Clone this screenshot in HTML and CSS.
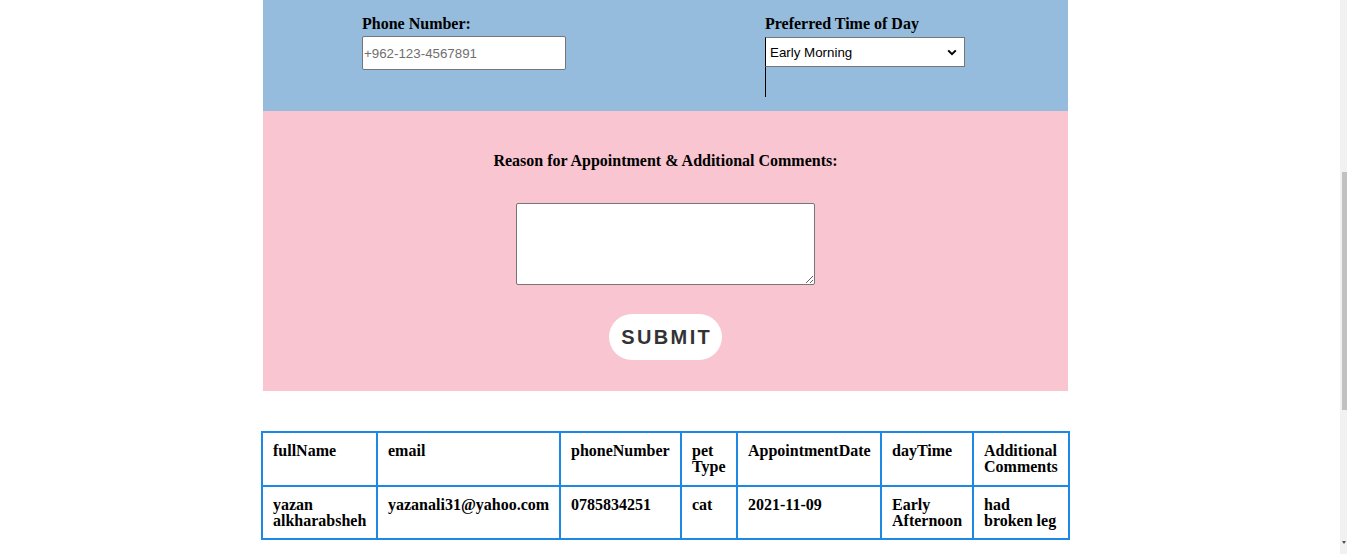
FILE: index.html
```html
<!DOCTYPE html>
<html lang="en">
<head>
<meta charset="utf-8">
<title>Appointment</title>
<link rel="stylesheet" href="styles.css">
</head>
<body>
<div class="page">
  <section class="contact">
    <div class="col col-left">
      <label class="lbl" for="phone">Phone Number:</label>
      <input id="phone" class="phone" type="tel" placeholder="+962-123-4567891">
    </div>
    <div class="col col-right">
      <label class="lbl" for="daytime">Preferred Time of Day</label>
      <div class="sel-wrap">
        <select id="daytime" class="time">
          <option>Early Morning</option>
          <option>Late Morning</option>
          <option>Early Afternoon</option>
          <option>Late Afternoon</option>
        </select>
      </div>
    </div>
  </section>
  <section class="comments">
    <label class="lbl" for="reason">Reason for Appointment &amp; Additional Comments:</label>
    <textarea id="reason" class="reason"></textarea>
    <button class="submit" type="button">SUBMIT</button>
  </section>
  <table class="records">
    <thead>
      <tr>
        <th class="c1">fullName</th>
        <th class="c2">email</th>
        <th class="c3">phoneNumber</th>
        <th class="c4">pet Type</th>
        <th class="c5">AppointmentDate</th>
        <th class="c6">dayTime</th>
        <th class="c7">Additional Comments</th>
      </tr>
    </thead>
    <tbody>
      <tr>
        <td>yazan alkharabsheh</td>
        <td>yazanali31@yahoo.com</td>
        <td>0785834251</td>
        <td>cat</td>
        <td>2021-11-09</td>
        <td>Early Afternoon</td>
        <td>had broken leg</td>
      </tr>
    </tbody>
  </table>
</div>
<div class="scrollbar"><div class="thumb"></div><div class="arrow"></div></div>
</body>
</html>
```
FILE: styles.css
```css
html, body {
  margin: 0;
  padding: 0;
  background: #ffffff;
}

body {
  font-family: "Liberation Serif", "Times New Roman", serif;
  color: #000;
}

.page {
  width: 805px;
  margin-left: 263px;
  display: flex;
  flex-direction: column;
  align-items: center;
}

.lbl {
  font-family: "Liberation Serif", "Times New Roman", serif;
  font-weight: bold;
  font-size: 16px;
  line-height: 18px;
  display: block;
}

.contact {
  width: 805px;
  height: 111px;
  box-sizing: border-box;
  padding-top: 15px;
  background: #95bcdc;
  display: grid;
  grid-template-columns: 1fr 1fr;
}

.col {
  display: flex;
  flex-direction: column;
  align-items: flex-start;
}

.col-left {
  padding-left: 99px;
}

.col-right {
  padding-left: 99.5px;
}

.phone {
  margin: 3px 0 0 0;
  width: 204px;
  height: 34px;
  box-sizing: border-box;
  border: 1px solid #767676;
  border-radius: 2px;
  padding: 1px 1px;
  font-family: "Liberation Sans", Arial, sans-serif;
  font-size: 13.333px;
  background: #fff;
  outline: none;
}

.phone::placeholder {
  color: #6f6f6f;
}

.sel-wrap {
  margin-top: 4px;
  height: 60px;
  border-left: 1px solid #000;
}

.time {
  margin: 0 0 0 -1px;
  width: 200px;
  height: 30px;
  box-sizing: border-box;
  border: 1px solid #767676;
  border-left-color: #000;
  border-radius: 0;
  padding: 0 0 0 4px;
  -webkit-appearance: none;
  appearance: none;
  font-family: "Liberation Sans", Arial, sans-serif;
  font-size: 13.333px;
  color: #000;
  background-color: #fff;
  background-image: url("data:image/svg+xml;utf8,<svg xmlns='http://www.w3.org/2000/svg' width='10' height='7' viewBox='0 0 10 7'><path d='M1.2 1.4 L5 5.2 L8.8 1.4' fill='none' stroke='black' stroke-width='2'/></svg>");
  background-repeat: no-repeat;
  background-position: right 7px center;
  background-size: 10px 7px;
  outline: none;
}

.comments {
  width: 805px;
  height: 280px;
  box-sizing: border-box;
  padding-top: 41px;
  background: #f9c5d0;
  display: flex;
  flex-direction: column;
  align-items: center;
}

.reason {
  margin: 33px 0 0 0;
  width: 299px;
  height: 82px;
  box-sizing: border-box;
  border: 1px solid #767676;
  border-radius: 2px;
  background: #fff;
  display: block;
  outline: none;
}

.submit {
  margin-top: 29px;
  width: 113px;
  height: 46px;
  border: none;
  border-radius: 23px;
  background: #fff;
  color: #333;
  font-family: "Liberation Sans", Arial, sans-serif;
  font-weight: bold;
  font-size: 20px;
  letter-spacing: 2.4px;
  padding: 0 0 0 2.4px;
  cursor: pointer;
}

.records {
  margin-top: 40px;
  width: 809px;
  table-layout: fixed;
  border-collapse: separate;
  border-spacing: 0;
  border-top: 2px solid #1e88e5;
  border-left: 2px solid #1e88e5;
}

.records th,
.records td {
  box-sizing: border-box;
  border-right: 2px solid #1e88e5;
  border-bottom: 2px solid #1e88e5;
  padding: 10px;
  font-family: "Liberation Serif", "Times New Roman", serif;
  font-weight: bold;
  font-size: 16px;
  line-height: 16px;
  text-align: left;
  vertical-align: top;
  color: #000;
}

.records td {
  padding-bottom: 9px;
}

.records .c1 { width: 115px; }
.records .c2 { width: 183px; }
.records .c3 { width: 121px; }
.records .c4 { width: 56px; }
.records .c5 { width: 144px; }
.records .c6 { width: 92px; }
.records .c7 { width: 96px; }

.scrollbar {
  position: fixed;
  top: 0;
  right: 0;
  width: 7px;
  height: 100%;
  background: #f1f1f1;
}

.thumb {
  position: absolute;
  top: 172px;
  left: 2px;
  width: 5px;
  height: 238px;
  background: #c1c1c1;
}

.arrow {
  position: absolute;
  top: 541px;
  left: 2px;
  width: 0;
  height: 0;
  border-left: 2px solid transparent;
  border-right: 2px solid transparent;
  border-top: 3px solid #505050;
}
```
